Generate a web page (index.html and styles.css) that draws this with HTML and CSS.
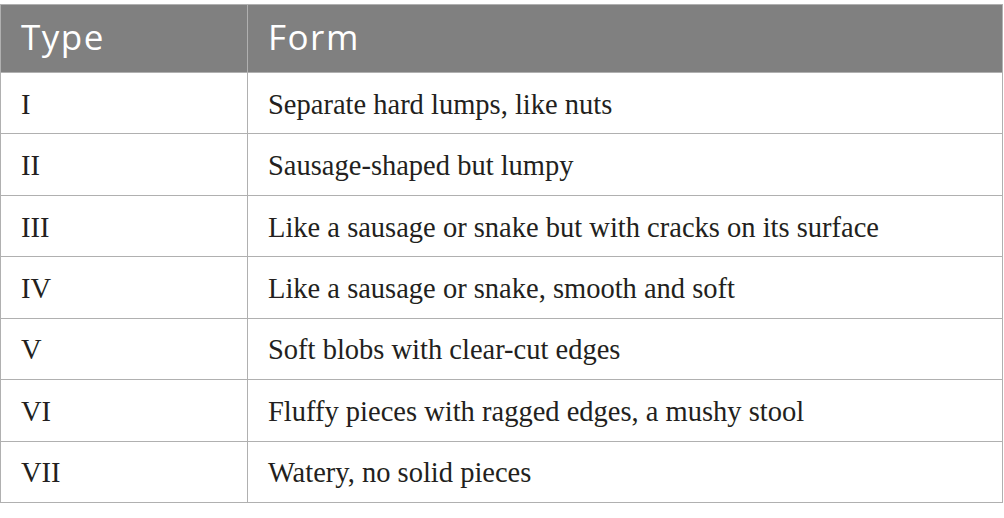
FILE: index.html
```html
<!DOCTYPE html>
<html lang="en">
<head>
<meta charset="utf-8">
<title>Bristol stool scale</title>
<link rel="stylesheet" href="styles.css">
</head>
<body>
<table class="scale">
  <thead>
    <tr><th class="col-type">Type</th><th>Form</th></tr>
  </thead>
  <tbody>
    <tr><td>I</td><td>Separate hard lumps, like nuts</td></tr>
    <tr><td>II</td><td>Sausage-shaped but lumpy</td></tr>
    <tr><td>III</td><td>Like a sausage or snake but with cracks on its surface</td></tr>
    <tr><td>IV</td><td>Like a sausage or snake, smooth and soft</td></tr>
    <tr><td>V</td><td>Soft blobs with clear-cut edges</td></tr>
    <tr><td>VI</td><td>Fluffy pieces with ragged edges, a mushy stool</td></tr>
    <tr><td>VII</td><td>Watery, no solid pieces</td></tr>
  </tbody>
</table>
</body>
</html>
```
FILE: styles.css
```css
html, body {
  margin: 0;
  padding: 0;
  background: #ffffff;
}
body {
  padding-top: 4px;
}
.scale {
  width: 1003px;
  border-collapse: collapse;
  table-layout: fixed;
}
.scale thead tr {
  height: 68px;
}
.scale tbody tr {
  height: 61.43px;
}
.scale th, .scale td {
  border: 1px solid #b0b0b0;
  text-align: left;
  vertical-align: middle;
  padding: 0 0 0 20px;
}
.scale th {
  background: #808080;
  color: #ffffff;
  font-family: "Open Sans", "Liberation Sans", sans-serif;
  font-weight: 400;
  font-size: 35px;
  letter-spacing: 1.5px;
  line-height: 40px;
  padding-bottom: 3px;
}
.scale .col-type {
  width: 226px;
}
.scale td {
  color: #231f20;
  font-family: "Liberation Serif", "DejaVu Serif", serif;
  font-size: 28.5px;
  line-height: 32px;
  padding-top: 3px;
}
```
